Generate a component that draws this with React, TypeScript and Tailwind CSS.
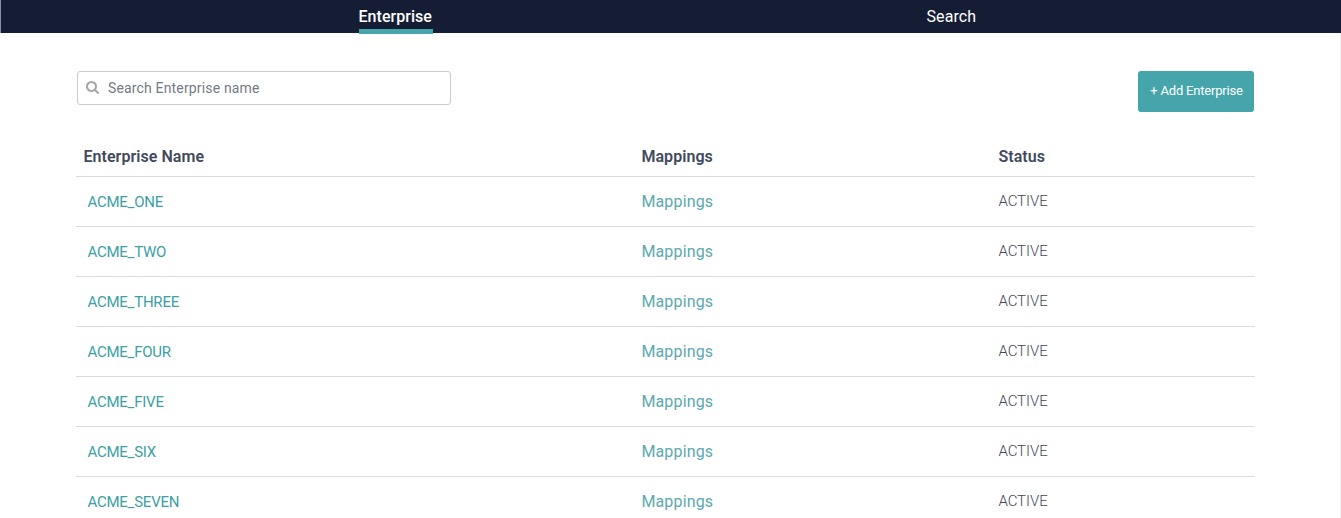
const enterprises = [
  { name: 'ACME_ONE', nudge: 'pt-[2px]' },
  { name: 'ACME_TWO', nudge: 'pt-[1px]' },
  { name: 'ACME_THREE', nudge: 'pt-[1px]' },
  { name: 'ACME_FOUR', nudge: 'pt-[2px]' },
  { name: 'ACME_FIVE', nudge: 'pt-[2px]' },
  { name: 'ACME_SIX', nudge: 'pt-[1px]' },
  { name: 'ACME_SEVEN', nudge: 'pt-[1px]' },
];

function SearchIcon() {
  return (
    <svg viewBox="0 128 1664 1664" className="-mt-[2px] h-[13px] w-[13px] shrink-0 fill-[#a4a6a9]" aria-hidden="true">
      <path d="M1152 832q0-185-131.5-316.5t-316.5-131.5-316.5 131.5-131.5 316.5 131.5 316.5 316.5 131.5 316.5-131.5 131.5-316.5zm512 832q0 52-38 90t-90 38q-54 0-90-38l-343-342q-179 124-399 124-143 0-273.5-55.5t-225-150-150-225-55.5-273.5 55.5-273.5 150-225 225-150 273.5-55.5 273.5 55.5 225 150 150 225 55.5 273.5q0 220-124 399l343 343q37 37 37 90z" />
    </svg>
  );
}

function NavBar() {
  return (
    <nav className="flex h-[33px] border-l border-[#8b8f9b] bg-[#151d34] text-base leading-[29px] text-white">
      <a className="ml-[357.5px] h-[34px] w-[74.5px] border-b-5 border-[#45a5ab] pt-[2px] font-medium tracking-[0.04px] whitespace-nowrap">
        Enterprise
      </a>
      <a className="ml-[493.5px] pt-[2px] tracking-[0.1px]">Search</a>
    </nav>
  );
}

function Toolbar() {
  return (
    <div className="flex items-start justify-between pr-[1.5px] pl-[0.5px]">
      <label className="flex h-[34px] w-[374px] items-center gap-[9px] rounded-[3px] border border-[#cacbcc] pl-[8.5px]">
        <SearchIcon />
        <input
          type="text"
          placeholder="Search Enterprise name"
          className="min-w-0 flex-1 text-sm tracking-[0.16px] outline-none placeholder:text-[#747b84]"
        />
      </label>
      <button className="h-[41px] w-[116px] rounded-[3px] bg-[#45a5ab] pb-[2px] pl-[2px] text-[13px] tracking-[-0.2px] whitespace-nowrap text-white">
        + Add Enterprise
      </button>
    </div>
  );
}

export default function App() {
  return (
    <div className="h-[518px] overflow-hidden bg-white font-[Roboto,'Liberation_Sans',sans-serif]">
      <NavBar />
      <main className="h-[485px] border-r border-[#f0f0f1] pt-[38px] pr-[85px] pl-[76px]">
        <Toolbar />
        <div className="mt-[25px]">
          <div className="grid h-[40px] grid-cols-[558px_357px_1fr] items-center border-b border-[#dcdcdc] pl-[7.4px] text-base font-semibold tracking-[0.06px] text-[#414a5d]">
            <span>Enterprise Name</span>
            <span>Mappings</span>
            <span>Status</span>
          </div>
          {enterprises.map((e) => (
            <div
              key={e.name}
              className="grid h-[50px] grid-cols-[558px_357px_1fr] items-center border-b border-[#dcdcdc] pl-[7.4px]"
            >
              <a className={`pl-[4px] text-[15px] tracking-[-0.22px] text-[#3ba1a4] ${e.nudge}`}>{e.name}</a>
              <a className="text-base tracking-[0.15px] text-[#5ba9af]">Mappings</a>
              <span className="text-[15px] font-light tracking-[-0.06px] text-[#3f475a]">ACTIVE</span>
            </div>
          ))}
        </div>
      </main>
    </div>
  );
}
